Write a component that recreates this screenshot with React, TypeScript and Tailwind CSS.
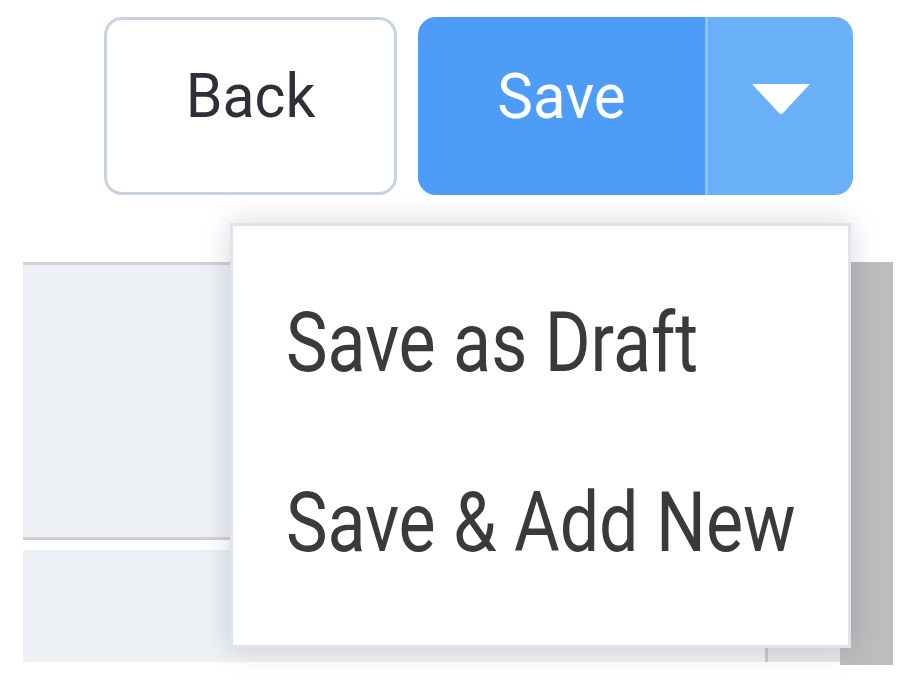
export default function App() {
  return (
    <div className="relative w-[910px] h-[680px] bg-white overflow-hidden font-['Roboto',sans-serif]">
      {/* Action buttons */}
      <div className="flex justify-end gap-[21px] pt-[17px] pr-[57px]">
        <button className="w-[293px] h-[178px] rounded-[18px] border-[3px] border-[#c9d3e0] bg-white flex justify-center items-start pt-[46px]">
          <span className="inline-block text-[59px] leading-none text-[#2f2f3a] scale-y-[1.04]">Back</span>
        </button>
        <div className="flex h-[178px] rounded-[18px] overflow-hidden">
          <button className="w-[287px] bg-[#4d9cf8] flex justify-center items-start pt-[50px]">
            <span className="inline-block text-[60px] leading-none text-white scale-y-[1.06]">Save</span>
          </button>
          <div className="w-[3px] bg-[#8fc4fb]" />
          <button className="w-[145px] bg-[#69b0f8] flex items-center justify-center">
            <svg width="62" height="34" viewBox="0 0 62 34" className="-mt-[14px]">
              <path d="M2 2 H60 L33 31 Q31 33 29 31 Z" fill="#ffffff" />
            </svg>
          </button>
        </div>
      </div>

      {/* Page content behind the menu */}
      <div className="flex mt-[67px] ml-[23px]">
        <div className="w-[817px]">
          <div className="h-[278px] bg-[#edf0f5] border-t-[3px] border-b-[3px] border-[#d1d1d1]" />
          <div className="h-[10px] bg-white" />
          <div className="h-[112px] bg-[#edf0f5] flex">
            <div className="w-[742px]" />
            <div className="w-[3px] bg-[#c9c9c9]" />
            <div className="flex-1 bg-[#e4e7ec]" />
          </div>
        </div>
        <div className="w-[53px] h-[403px] bg-[#bdbdbd]" />
      </div>

      {/* Save options menu */}
      <div className="absolute left-[230px] top-[223px] w-[621px] h-[425px] bg-white border-[3px] border-[#dde4ed] shadow-[0_0_28px_rgba(0,0,0,0.16)] pt-[27px]">
        {["Save as Draft", "Save & Add New"].map((label) => (
          <div key={label} className="h-[180px] flex items-center pl-[53px]">
            <span className="inline-block text-[70px] leading-none text-[#3a3a3a] scale-y-[1.18] origin-center">
              {label}
            </span>
          </div>
        ))}
      </div>
    </div>
  );
}
